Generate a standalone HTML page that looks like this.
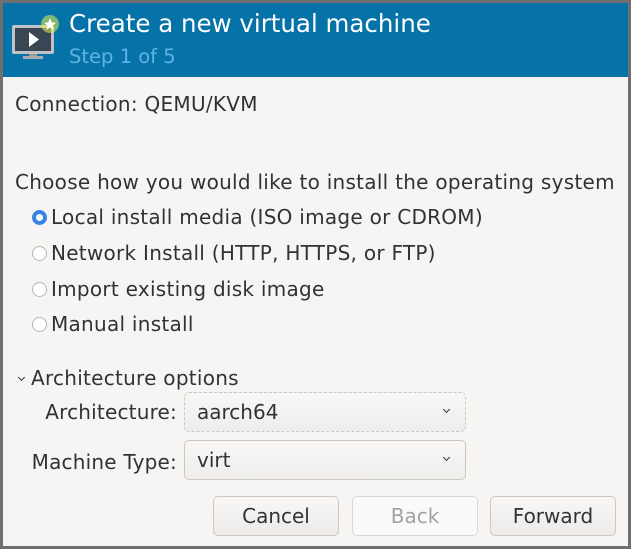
<!DOCTYPE html>
<html><head><style>
html,body{margin:0;padding:0}
body{width:631px;height:549px;background:#6f6f6f;position:relative;overflow:hidden;font-family:"DejaVu Sans","Liberation Sans",sans-serif;color:#2e3436}
.win{position:absolute;left:3px;top:3px;width:625px;height:543px;background:#f6f5f4}
.hdr{position:absolute;left:0;top:0;width:625px;height:74px;background:#0673a8}
.t1{position:absolute;left:66px;top:6px;font-size:24.5px;color:#fff}
.t2{position:absolute;left:66px;top:42px;font-size:19.5px;color:#5fb3e4}
.txt{position:absolute;font-size:20px;white-space:nowrap;letter-spacing:0.27px}
.rad{position:absolute;left:29px;width:13px;height:13px;border:1px solid #b9b5b0;border-radius:50%;background:#fff}
.rad.on{background:#fff;border:4px solid #3584e4;width:7px;height:7px}
.combo{position:absolute;left:181px;width:280px;height:38px;border:1px solid #cdc7c2;border-radius:5px;background:linear-gradient(#f8f7f6,#eeedec)}
.combo span{position:absolute;left:12px;top:7px;font-size:20px}
.combo i{position:absolute;right:16px;top:14px;width:4px;height:4px;border-right:1.5px solid #2e3436;border-bottom:1.5px solid #2e3436;transform:rotate(45deg)}
.btn{position:absolute;top:493px;width:124px;height:38px;border:1px solid #cdc7c2;border-radius:5px;background:linear-gradient(#f8f7f6,#edebe9);font-size:20px;text-align:center;line-height:38px}
.lbl{position:absolute;right:451px;font-size:20px;white-space:nowrap;letter-spacing:0.2px}
</style></head><body>
<div class="win">
<div class="hdr">
<svg style="position:absolute;left:6px;top:10px" width="52" height="48" viewBox="0 0 52 48">
<rect x="3" y="12" width="42" height="29" rx="2" fill="#bfc3c7"/>
<rect x="6" y="15" width="36" height="23" fill="#3b4654"/>
<polygon points="20,19 20,34 30,26.5" fill="#fff"/>
<rect x="20" y="41" width="8" height="3" fill="#999"/>
<rect x="14" y="43" width="20" height="3" fill="#aaa"/>
<circle cx="41" cy="11" r="9" fill="#e6f04a" opacity=".55"/>
<polygon points="41,5 42.8,9.5 47,9.7 43.7,12.5 44.8,17 41,14.5 37.2,17 38.3,12.5 35,9.7 39.2,9.5" fill="#fff"/>
</svg>
<div class="t1">Create a new virtual machine</div>
<div class="t2">Step 1 of 5</div>
</div>
<div class="txt" style="left:12px;top:89px">Connection: QEMU/KVM</div>
<div class="txt" style="left:12px;top:167px">Choose how you would like to install the operating system</div>
<div class="rad on" style="top:207px"></div><div class="txt" style="left:48px;top:202px">Local install media (ISO image or CDROM)</div>
<div class="rad" style="top:243px"></div><div class="txt" style="left:48px;top:238px">Network Install (HTTP, HTTPS, or FTP)</div>
<div class="rad" style="top:279px"></div><div class="txt" style="left:48px;top:274px">Import existing disk image</div>
<div class="rad" style="top:314px"></div><div class="txt" style="left:48px;top:309px">Manual install</div>
<div style="position:absolute;left:16px;top:372px;width:4px;height:4px;border-right:1.5px solid #2e3436;border-bottom:1.5px solid #2e3436;transform:rotate(45deg)"></div>
<div class="txt" style="left:28px;top:363px">Architecture options</div>
<div class="lbl" style="top:397px">Architecture:</div>
<div class="combo" style="top:389px;border-style:dashed"><span>aarch64</span><i></i></div>
<div class="lbl" style="top:447px">Machine Type:</div>
<div class="combo" style="top:437px"><span>virt</span><i></i></div>
<div class="btn" style="left:210px">Cancel</div>
<div class="btn" style="left:349px;background:#fafafa;color:#a0a3a4;border-color:#dcd8d4">Back</div>
<div class="btn" style="left:487px">Forward</div>
</div>
</body></html>
